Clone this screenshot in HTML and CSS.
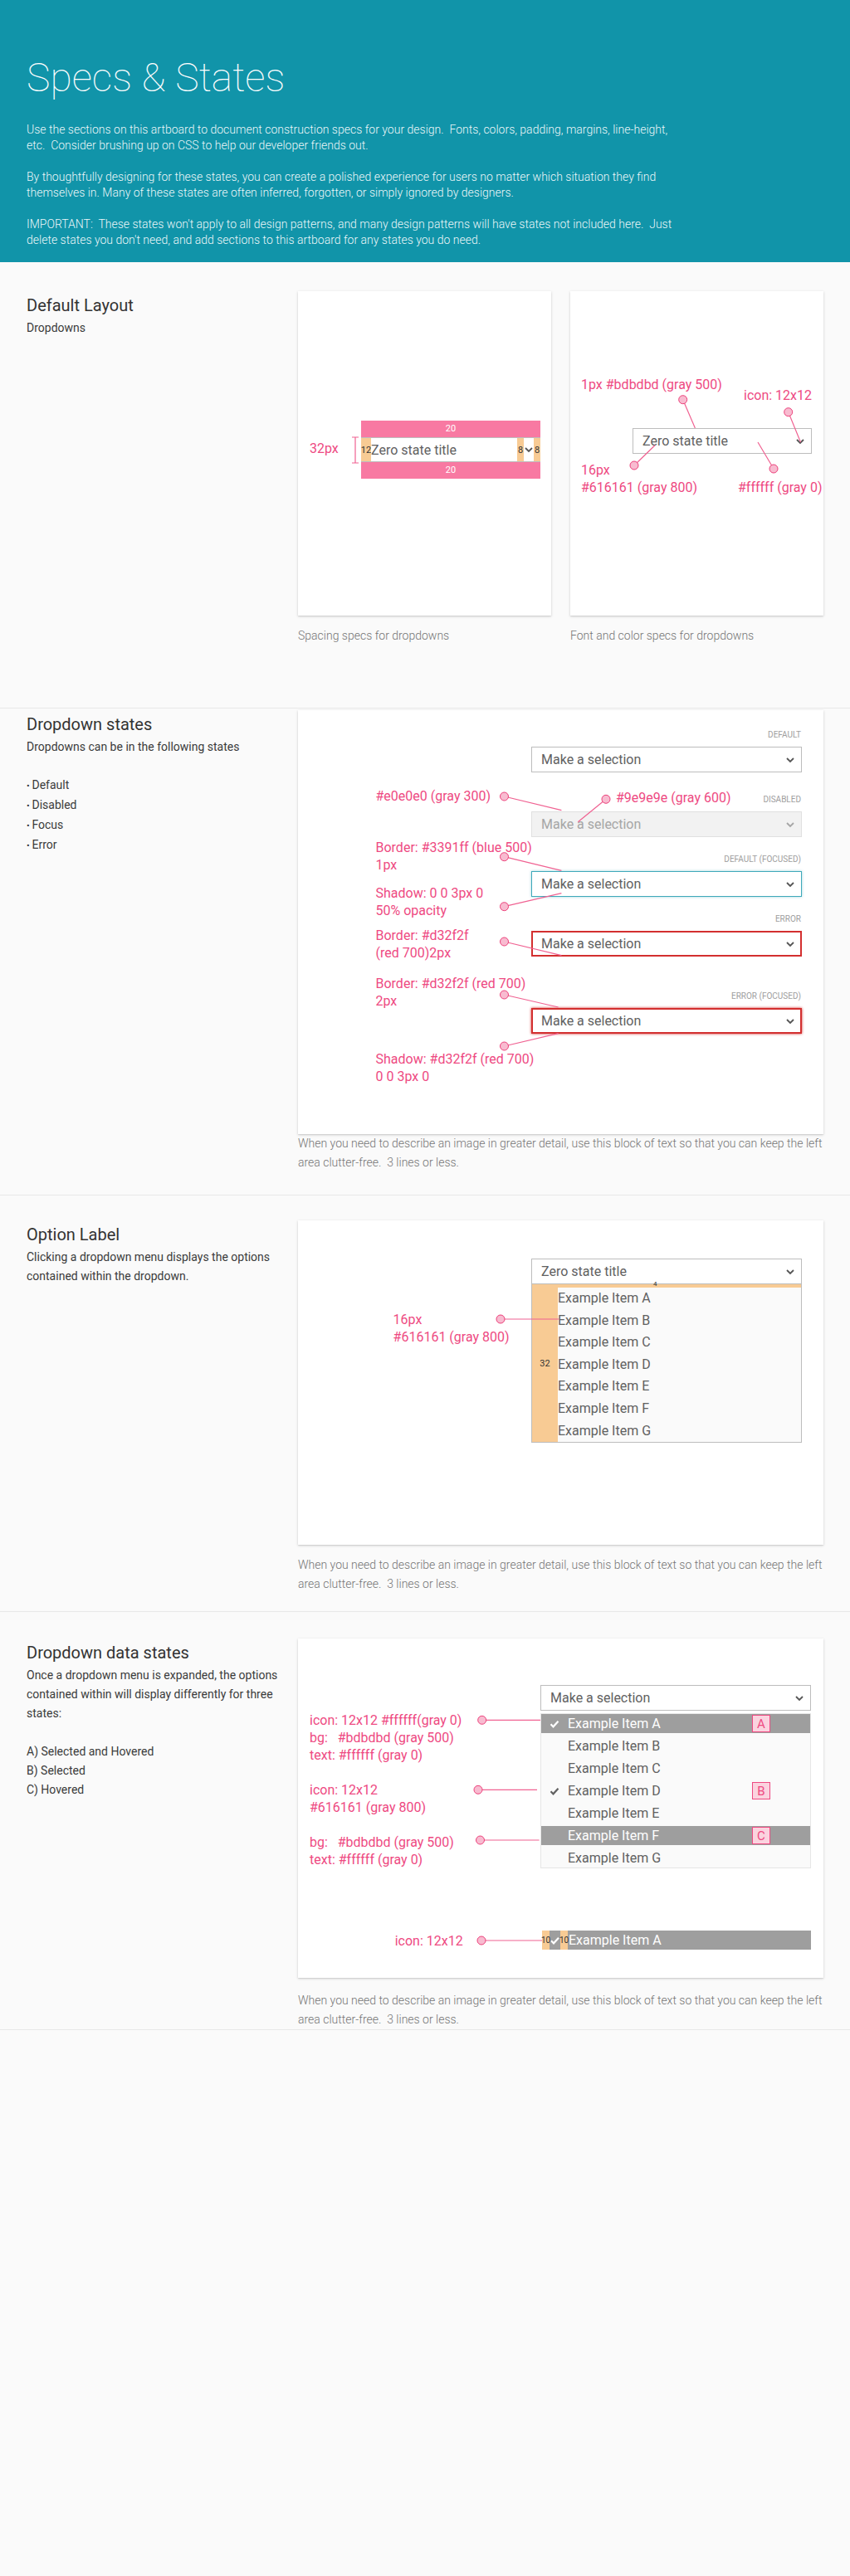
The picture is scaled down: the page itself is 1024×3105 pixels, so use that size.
FILE: index.html
```html
<!DOCTYPE html>
<html lang="en">
<head>
<meta charset="utf-8">
<title>Specs &amp; States</title>
<link rel="stylesheet" href="styles.css">
</head>
<body>
<header class="hero">
  <h1 class="hero__title">Specs &amp; States</h1>
  <p class="hero__text hero__text--first">Use the sections on this artboard to document construction specs for your design.&nbsp; Fonts, colors, padding, margins, line-height, etc.&nbsp; Consider brushing up on CSS to help our developer friends out.</p>
  <p class="hero__text">By thoughtfully designing for these states, you can create a polished experience for users no matter which situation they find themselves in. Many of these states are often inferred, forgotten, or simply ignored by designers.</p>
  <p class="hero__text">IMPORTANT:&nbsp; These states won't apply to all design patterns, and many design patterns will have states not included here.&nbsp; Just delete states you don't need, and add sections to this artboard for any states you do need.</p>
</header>

<main>
  <section class="spec spec--layout">
    <div class="spec__info">
      <h2 class="spec__title">Default Layout</h2>
      <p class="spec__desc">Dropdowns</p>
    </div>
    <div class="spec__figs spec__figs--pair">
      <figure class="fig">
        <div class="card card--half card--spacing">
          <div class="spacing">
            <div class="spacing__band">20</div>
            <div class="dd dd--spec">
              <span class="pad pad--12">12</span>
              <span class="dd__text">Zero state title</span>
              <span class="pad pad--8">8</span>
              <svg class="chev" viewBox="0 0 12 12"><path d="M2 4l4 4 4-4"/></svg>
              <span class="pad pad--8">8</span>
            </div>
            <div class="spacing__band">20</div>
          </div>
          <svg class="overlay" width="305" height="391" viewBox="0 0 305 391">
            <path class="lead" d="M65 176H73M69 176V207M65 207H73"/>
          </svg>
          <span class="note note--c1-32">32px</span>
        </div>
        <figcaption class="caption">Spacing specs for dropdowns</figcaption>
      </figure>
      <figure class="fig">
        <div class="card card--half card--colors">
          <div class="dd dd--half">
            <span class="dd__text">Zero state title</span>
            <svg class="chev" viewBox="0 0 12 12"><path d="M2 4l4 4 4-4"/></svg>
          </div>
          <svg class="overlay" width="305" height="391" viewBox="0 0 305 391">
            <path class="lead" d="M135.7 130.7L150.4 165M262.7 145.7L277.5 182M77 210L102 185.7M245 214L226 182"/>
            <circle class="dot" cx="135.7" cy="130.7" r="5"/>
            <circle class="dot" cx="262.7" cy="145.7" r="5"/>
            <circle class="dot" cx="77" cy="210" r="5"/>
            <circle class="dot" cx="245" cy="214" r="5"/>
          </svg>
          <span class="note note--c2-border">1px #bdbdbd (gray 500)</span>
          <span class="note note--c2-icon">icon: 12x12</span>
          <span class="note note--c2-font">16px<br>#616161 (gray 800)</span>
          <span class="note note--c2-bg">#ffffff (gray 0)</span>
        </div>
        <figcaption class="caption">Font and color specs for dropdowns</figcaption>
      </figure>
    </div>
  </section>

  <section class="spec spec--states">
    <div class="spec__info">
      <h2 class="spec__title">Dropdown states</h2>
      <p class="spec__desc">Dropdowns can be in the following states</p>
      <ul class="spec__list">
        <li>Default</li>
        <li>Disabled</li>
        <li>Focus</li>
        <li>Error</li>
      </ul>
    </div>
    <div class="spec__figs">
      <figure class="fig">
        <div class="card card--wide card--states">
          <div class="state-stack">
            <div class="state">
              <div class="state__label">Default</div>
              <div class="dd"><span class="dd__text">Make a selection</span><svg class="chev" viewBox="0 0 12 12"><path d="M2 4l4 4 4-4"/></svg></div>
            </div>
            <div class="state state--disabled">
              <div class="state__label">Disabled</div>
              <div class="dd dd--disabled"><span class="dd__text">Make a selection</span><svg class="chev" viewBox="0 0 12 12"><path d="M2 4l4 4 4-4"/></svg></div>
            </div>
            <div class="state">
              <div class="state__label">Default (Focused)</div>
              <div class="dd dd--focus"><span class="dd__text">Make a selection</span><svg class="chev" viewBox="0 0 12 12"><path d="M2 4l4 4 4-4"/></svg></div>
            </div>
            <div class="state">
              <div class="state__label">Error</div>
              <div class="dd dd--error"><span class="dd__text">Make a selection</span><svg class="chev" viewBox="0 0 12 12"><path d="M2 4l4 4 4-4"/></svg></div>
            </div>
            <div class="state state--error-focus">
              <div class="state__label">Error (Focused)</div>
              <div class="dd dd--error dd--error-focus"><span class="dd__text">Make a selection</span><svg class="chev" viewBox="0 0 12 12"><path d="M2 4l4 4 4-4"/></svg></div>
            </div>
          </div>
          <svg class="overlay" width="633" height="511" viewBox="0 0 633 511">
            <path class="lead" d="M248.5 104L317.4 120.7M371 107.3L337.3 134.7M248.5 176.7L317.4 193.3M248.5 236.7L317.4 220.7M248.5 279L317.4 295.7M248.5 343L313.6 358M248.5 405L313.6 389.7"/>
            <circle class="dot" cx="248.5" cy="104" r="5"/>
            <circle class="dot" cx="371" cy="107.3" r="5"/>
            <circle class="dot" cx="248.5" cy="176.7" r="5"/>
            <circle class="dot" cx="248.5" cy="236.7" r="5"/>
            <circle class="dot" cx="248.5" cy="279" r="5"/>
            <circle class="dot" cx="248.5" cy="343" r="5"/>
            <circle class="dot" cx="248.5" cy="405" r="5"/>
          </svg>
          <span class="note note--s-e0">#e0e0e0 (gray 300)</span>
          <span class="note note--s-9e">#9e9e9e (gray 600)</span>
          <span class="note note--s-blue">Border: #3391ff (blue 500)<br>1px</span>
          <span class="note note--s-shadow">Shadow: 0 0 3px 0<br>50% opacity</span>
          <span class="note note--s-err">Border: #d32f2f<br>(red 700)2px</span>
          <span class="note note--s-errf">Border: #d32f2f (red 700)<br>2px</span>
          <span class="note note--s-errsh">Shadow: #d32f2f (red 700)<br>0 0 3px 0</span>
        </div>
        <figcaption class="caption caption--wide caption--flush">When you need to describe an image in greater detail, use this block of text so that you can keep the left area clutter-free.&nbsp; 3 lines or less.</figcaption>
      </figure>
    </div>
  </section>

  <section class="spec spec--option">
    <div class="spec__info">
      <h2 class="spec__title">Option Label</h2>
      <p class="spec__desc">Clicking a dropdown menu displays the options contained within the dropdown.</p>
    </div>
    <div class="spec__figs">
      <figure class="fig">
        <div class="card card--wide card--option">
          <div class="menu">
            <div class="dd"><span class="dd__text">Zero state title</span><svg class="chev" viewBox="0 0 12 12"><path d="M2 4l4 4 4-4"/></svg></div>
            <div class="menu__list">
              <div class="menu__gutter">32</div>
              <ul class="menu__items">
                <li>Example Item A</li>
                <li>Example Item B</li>
                <li>Example Item C</li>
                <li>Example Item D</li>
                <li>Example Item E</li>
                <li>Example Item F</li>
                <li>Example Item G</li>
              </ul>
              <span class="menu__gap-label">4</span>
            </div>
          </div>
          <svg class="overlay" width="633" height="391" viewBox="0 0 633 391">
            <path class="lead" d="M244 119H314"/>
            <circle class="dot" cx="244" cy="119" r="5"/>
          </svg>
          <span class="note note--o-font">16px<br>#616161 (gray 800)</span>
        </div>
        <figcaption class="caption caption--wide">When you need to describe an image in greater detail, use this block of text so that you can keep the left area clutter-free.&nbsp; 3 lines or less.</figcaption>
      </figure>
    </div>
  </section>

  <section class="spec spec--data">
    <div class="spec__info">
      <h2 class="spec__title">Dropdown data states</h2>
      <p class="spec__desc">Once a dropdown menu is expanded, the options contained within will display differently for three states:</p>
      <ul class="spec__list spec__list--plain">
        <li>A) Selected and Hovered</li>
        <li>B) Selected</li>
        <li>C) Hovered</li>
      </ul>
    </div>
    <div class="spec__figs">
      <figure class="fig">
        <div class="card card--wide card--data">
          <div class="menu">
            <div class="dd"><span class="dd__text">Make a selection</span><svg class="chev" viewBox="0 0 12 12"><path d="M2 4l4 4 4-4"/></svg></div>
            <ul class="data-list">
              <li class="row row--active"><svg class="check" viewBox="0 0 12 12"><path d="M1.5 6.3l3 3 6-6.6"/></svg><span>Example Item A</span><span class="badge">A</span></li>
              <li class="row"><span class="row__blank"></span><span>Example Item B</span></li>
              <li class="row"><span class="row__blank"></span><span>Example Item C</span></li>
              <li class="row"><svg class="check" viewBox="0 0 12 12"><path d="M1.5 6.3l3 3 6-6.6"/></svg><span>Example Item D</span><span class="badge">B</span></li>
              <li class="row"><span class="row__blank"></span><span>Example Item E</span></li>
              <li class="row row--active"><span class="row__blank"></span><span>Example Item F</span><span class="badge">C</span></li>
              <li class="row"><span class="row__blank"></span><span>Example Item G</span></li>
            </ul>
          </div>
          <div class="icon-spec">
            <span class="icon-spec__pad">10</span>
            <svg class="check" viewBox="0 0 12 12"><path d="M1.5 6.3l3 3 6-6.6"/></svg>
            <span class="icon-spec__pad">10</span>
            <span class="icon-spec__text">Example Item A</span>
          </div>
          <svg class="overlay" width="633" height="409" viewBox="0 0 633 409">
            <path class="lead" d="M221.7 98.3H292M217 182.3H288M219.5 243H290.6M221 364H294"/>
            <circle class="dot" cx="221.7" cy="98.3" r="5"/>
            <circle class="dot" cx="217" cy="182.3" r="5"/>
            <circle class="dot" cx="219.5" cy="243" r="5"/>
            <circle class="dot" cx="221" cy="364" r="5"/>
          </svg>
          <span class="note note--d-a">icon: 12x12 #ffffff(gray 0)<br>bg:   #bdbdbd (gray 500)<br>text: #ffffff (gray 0)</span>
          <span class="note note--d-b">icon: 12x12<br>#616161 (gray 800)</span>
          <span class="note note--d-c">bg:   #bdbdbd (gray 500)<br>text: #ffffff (gray 0)</span>
          <span class="note note--d-icon">icon: 12x12</span>
        </div>
        <figcaption class="caption caption--wide caption--data">When you need to describe an image in greater detail, use this block of text so that you can keep the left area clutter-free.&nbsp; 3 lines or less.</figcaption>
      </figure>
    </div>
  </section>
</main>
</body>
</html>
```

FILE: styles.css
```css
* { box-sizing: border-box; }

body {
  margin: 0;
  min-height: 3105px;
  background: #fafafa;
  font-family: Roboto, "Noto Sans", "Liberation Sans", sans-serif;
  color: #333;
}

/* ---------- header ---------- */
.hero {
  height: 316px;
  background: #1194a9;
  color: #fff;
  padding: 66px 32px 0;
}
.hero__title {
  margin: 0;
  font-size: 48px;
  line-height: 56px;
  font-weight: 100;
}
.hero__text {
  margin: 19px 0 0;
  max-width: 788px;
  font-size: 14px;
  line-height: 19px;
  font-weight: 300;
  color: rgba(255, 255, 255, 0.95);
}
.hero__text--first { margin-top: 24.5px; }

/* ---------- sections ---------- */
.spec {
  display: flex;
  border-bottom: 1px solid #e8e8e8;
}
.spec--layout { padding: 35px 0 75px; }
.spec--states { padding: 2px 0 27px; }
.spec--option { padding: 30px 0 21px; }
.spec--data { padding: 32px 0 0; }

.spec__info {
  width: 359px;
  flex: none;
  padding: 3px 0 0 32px;
}
.spec__title {
  margin: 0;
  font-size: 20px;
  line-height: 28px;
  font-weight: 400;
  color: #333;
}
.spec__desc {
  margin: 2px 0 0;
  font-size: 14px;
  line-height: 23px;
  color: #3a3a3a;
}
.spec__list {
  list-style: none;
  margin: 23px 0 0;
  padding: 0;
  font-size: 14px;
  line-height: 23px;
  color: #3a3a3a;
}
.spec__list li::before { content: "\2022  "; font-size: 11px; }
.spec__list--plain li::before { content: none; }

.spec__figs { width: 633px; flex: none; }
.spec__figs--pair { display: flex; gap: 23px; }

.fig { margin: 0; }

.card {
  position: relative;
  background: #fff;
  box-shadow: 0 1px 3px rgba(0, 0, 0, 0.18), 0 1px 1px rgba(0, 0, 0, 0.05);
}
.card--half { width: 305px; height: 391px; }
.card--wide { width: 633px; }

.caption {
  margin: 13px 0 0;
  font-size: 14px;
  line-height: 23px;
  font-weight: 300;
  color: #757575;
}
.caption--wide { width: 640px; }
.caption--flush { margin-top: 0; }
.caption--data { margin-top: 16px; }

/* ---------- dropdown ---------- */
.dd {
  display: flex;
  align-items: center;
  height: 31px;
  padding: 0 7px 0 11px;
  border: 1px solid #bdbdbd;
  background: #fff;
  font-size: 16px;
  color: #616161;
}
.dd__text { flex: 1; white-space: nowrap; }
.chev {
  width: 12px;
  height: 12px;
  flex: none;
  color: #555;
}
.chev path {
  fill: none;
  stroke: currentColor;
  stroke-width: 1.8;
}
.dd--disabled {
  background: #f2f2f2;
  border-color: #e0e0e0;
  color: #a6a6a6;
}
.dd--disabled .chev { color: #a6a6a6; }
.dd--focus {
  border-color: #3fa9ba;
  box-shadow: 0 0 3px rgba(63, 169, 186, 0.5);
}
.dd--error {
  border: 2px solid #d32f2f;
  padding: 0 6px 0 10px;
}
.dd--error-focus { box-shadow: 0 0 3px #d32f2f; }

/* ---------- card 1 : spacing ---------- */
.card--spacing { padding: 156px 0 0 76px; }
.spacing { width: 216px; }
.spacing__band {
  height: 20px;
  background: #f879a2;
  color: #fff;
  font-size: 11px;
  line-height: 20px;
  text-align: center;
}
.dd--spec {
  height: 30px;
  padding: 0;
  border-left: 0;
  border-right: 0;
}
.pad {
  align-self: stretch;
  flex: none;
  display: flex;
  align-items: center;
  justify-content: center;
  background: #f8cb94;
  font-size: 11px;
  color: #333;
  overflow: visible;
}
.pad--12 { width: 12px; }
.pad--8 { width: 8px; }

/* ---------- card 2 : colors ---------- */
.card--colors { padding: 165px 0 0 75px; }
.dd--half { width: 216px; }

/* ---------- annotations ---------- */
.overlay {
  position: absolute;
  left: 0;
  top: 0;
  pointer-events: none;
  overflow: visible;
}
.lead {
  fill: none;
  stroke: #f06292;
  stroke-width: 1.2;
}
.dot {
  fill: #f8bbd0;
  stroke: #ec407a;
  stroke-width: 1;
}
.note {
  position: absolute;
  font-size: 16px;
  line-height: 21px;
  color: #ee4a82;
  white-space: pre;
}
.note--c1-32 { left: 14px; top: 179px; }
.note--c2-border { left: 13px; top: 101.5px; }
.note--c2-icon { left: 209px; top: 114.5px; }
.note--c2-font { left: 13px; top: 205px; }
.note--c2-bg { left: 202px; top: 225.5px; }

.note--s-e0 { left: 93.5px; top: 92.8px; }
.note--s-9e { left: 383px; top: 95.2px; }
.note--s-blue { left: 93.5px; top: 155.2px; }
.note--s-shadow { left: 93.5px; top: 210.2px; }
.note--s-err { left: 93.5px; top: 260.8px; }
.note--s-errf { left: 93.5px; top: 318.5px; }
.note--s-errsh { left: 93.5px; top: 409.5px; }

.note--o-font { left: 114.6px; top: 109.2px; }

.note--d-a { left: 14px; top: 87.8px; }
.note--d-b { left: 14px; top: 171.8px; }
.note--d-c { left: 14px; top: 234.5px; }
.note--d-icon { left: 116.7px; top: 353.8px; }

/* ---------- states card ---------- */
.card--states { height: 511px; padding: 24px 0 0 281px; }
.state-stack { width: 326px; }
.state__label {
  margin-bottom: 8px;
  padding-right: 1px;
  text-align: right;
  font-size: 10px;
  line-height: 12px;
  text-transform: uppercase;
  color: #9e9e9e;
}
.state + .state { margin-top: 21px; }
.state.state--disabled { margin-top: 27px; }
.state.state--error-focus { margin-top: 42px; }

/* ---------- option label card ---------- */
.card--option { height: 391px; padding: 46px 0 0 281px; }
.menu { width: 326px; }
.menu__list {
  position: relative;
  display: flex;
  border: 1px solid #bdbdbd;
  border-top: 0;
  background: #fafafa;
}
.menu__gutter {
  width: 31px;
  flex: none;
  display: flex;
  align-items: center;
  justify-content: center;
  background: #f8cb94;
  font-size: 11px;
  color: #333;
}
.menu__items {
  flex: 1;
  margin: 0;
  padding: 0;
  list-style: none;
  border-top: 4px solid #f8cb94;
  font-size: 16px;
  line-height: 26.6px;
  color: #616161;
}
.menu__gap-label {
  position: absolute;
  left: 146px;
  top: -4px;
  font-size: 8px;
  line-height: 8px;
  color: #333;
}

/* ---------- data states card ---------- */
.card--data { height: 409px; padding: 56px 0 0 292px; }
.data-list {
  margin: 3px 0 0;
  padding: 0;
  list-style: none;
  display: flex;
  flex-direction: column;
  gap: 4px;
  border: 1px solid #e6e6e6;
  background: #fafafa;
}
.row {
  display: flex;
  align-items: center;
  gap: 10px;
  height: 23px;
  padding-left: 10px;
  font-size: 16px;
  color: #616161;
}
.row--active {
  background: #9e9e9e;
  color: #fff;
}
.row__blank { width: 12px; flex: none; }
.check {
  width: 12px;
  height: 12px;
  flex: none;
}
.check path {
  fill: none;
  stroke: currentColor;
  stroke-width: 2.2;
}
.badge {
  margin-left: auto;
  margin-right: 48px;
  width: 22px;
  height: 21px;
  display: flex;
  align-items: center;
  justify-content: center;
  border: 1px solid #ee4a82;
  background: #fbd3df;
  color: #ee4a82;
  font-size: 15px;
}

.icon-spec {
  display: flex;
  align-items: center;
  width: 324px;
  height: 23px;
  margin: 75px 0 0 2px;
  background: #9e9e9e;
  color: #fff;
  font-size: 16px;
}
.icon-spec__pad {
  align-self: stretch;
  width: 9px;
  flex: none;
  display: flex;
  align-items: center;
  justify-content: center;
  background: #f8cb94;
  font-size: 10px;
  color: #333;
}
.icon-spec .check { width: 13px; }
.icon-spec__text { margin-left: 1px; }
```
